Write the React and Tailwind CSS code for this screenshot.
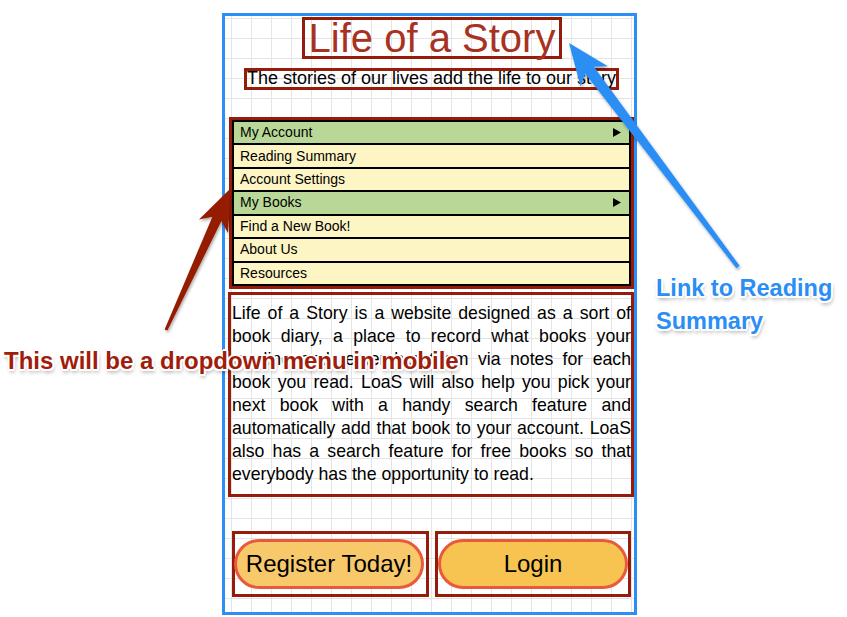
import React from "react";

const menu = [
  { label: "My Account", head: true },
  { label: "Reading Summary" },
  { label: "Account Settings" },
  { label: "My Books", head: true },
  { label: "Find a New Book!" },
  { label: "About Us" },
  { label: "Resources" },
];

function Arrows() {
  return (
    <svg
      className="absolute left-0 top-0 pointer-events-none"
      width="847"
      height="617"
      viewBox="0 0 847 617"
    >
      <defs>
        <filter id="sh" x="-20%" y="-20%" width="140%" height="140%">
          <feDropShadow dx="1" dy="2" stdDeviation="1.5" floodColor="#000" floodOpacity="0.35" />
        </filter>
      </defs>
      <polygon
        filter="url(#sh)"
        fill="#951b06"
        points="164.6,329.4 212.4,216.8 199,219.5 231,188 228,232.9 221.4,221 167.4,330.6"
      />
      <polygon
        filter="url(#sh)"
        fill="#2b8ef5"
        points="739.6,265.8 593.9,66.8 607.9,66.2 569,43 580.7,86.8 585.1,73.4 736.4,268.2"
      />
    </svg>
  );
}

export default function App() {
  return (
    <div className="relative w-[847px] h-[617px] overflow-hidden bg-white font-['Liberation_Sans',Arial,sans-serif]">
      <div className="pt-[13px] pl-[222px]">
        <div className="w-[415px] h-[602px] border-[3px] border-[#2c8ef7] bg-white bg-[linear-gradient(to_right,#e4e4e4_1px,transparent_1px),linear-gradient(to_bottom,#e4e4e4_1px,transparent_1px)] bg-size-[20px_20px] bg-position-[6px_2px]">
          <div className="flex flex-col">
            <div className="mt-[1px] ml-[77px] w-[260px] h-[42px] border-[3px] border-[#951c0b] flex justify-center text-[40px] leading-[36px] text-[#a8311f] whitespace-nowrap">
              Life of a Story
            </div>
            <div className="mt-[9px] ml-[19px] w-[375px] h-[22px] border-[3px] border-[#951c0b] flex justify-center text-[18px] leading-[14px] text-black whitespace-nowrap">
              The stories of our lives add the life to our story
            </div>
            <div className="mt-[27px] ml-[4px] w-[405px] h-[172px] border-[3px] border-[#951c0b]">
              <div className="h-[166px] border-2 border-black flex flex-col">
                {menu.map((m, i) => (
                  <div
                    key={m.label}
                    className={
                      "flex-1 flex items-center justify-between pl-[6px] pr-[8px] text-[14px] text-black " +
                      (i > 0 ? "border-t-2 border-black " : "") +
                      (m.head ? "bg-[#b9d898]" : "bg-[#fdf6c4]")
                    }
                  >
                    <span>{m.label}</span>
                    {m.head && (
                      <svg width="8" height="9" viewBox="0 0 8 9">
                        <polygon points="0,0 8,4.5 0,9" fill="#000" />
                      </svg>
                    )}
                  </div>
                ))}
              </div>
            </div>
            <div className="mt-[3px] ml-[3px] w-[406px] h-[205px] border-[3px] border-[#951c0b] pt-[7px] pl-[1px]">
              <p className="text-[17.7px] leading-[23px] text-black text-justify">
                Life of a Story is a website designed as a sort of book diary, a place to record what books your
                reading and remember them via notes for each book you read. LoaS will also help you pick your
                next book with a handy search feature and automatically add that book to your account. LoaS also
                has a search feature for free books so that everybody has the opportunity to read.
              </p>
            </div>
            <div className="mt-[34px] ml-[7px] flex gap-[6px]">
              <div className="w-[197px] h-[66px] border-[3px] border-[#951c0b] flex items-center pr-[1px]">
                <div className="-ml-[1px] w-full h-[50px] rounded-full border-[3px] border-[#e85a3b] bg-[#f8c96b] flex items-center justify-center text-[24px] text-black">
                  Register Today!
                </div>
              </div>
              <div className="w-[196px] h-[66px] border-[3px] border-[#951c0b] flex items-center">
                <div className="w-full h-[50px] rounded-full border-[3px] border-[#e85a3b] bg-[#f7c451] flex items-center justify-center text-[24px] text-black">
                  Login
                </div>
              </div>
            </div>
          </div>
        </div>
      </div>

      <Arrows />

      <div className="absolute left-[4px] top-[349px] text-[24px] leading-[24px] font-bold text-[#a01c0b] whitespace-nowrap [text-shadow:-1.5px_-1.5px_0_#fff,1.5px_-1.5px_0_#fff,-1.5px_1.5px_0_#fff,1.5px_1.5px_0_#fff,0_2px_0_#fff,0_-2px_0_#fff,2px_0_0_#fff,-2px_0_0_#fff,1px_3px_4px_rgba(0,0,0,0.45)]">
        This will be a dropdown menu in mobile
      </div>
      <div className="absolute left-[656px] top-[272px] text-[23.5px] leading-[33px] font-bold text-[#2b8ef5] whitespace-nowrap [text-shadow:-1.5px_-1.5px_0_#fff,1.5px_-1.5px_0_#fff,-1.5px_1.5px_0_#fff,1.5px_1.5px_0_#fff,0_2px_0_#fff,0_-2px_0_#fff,2px_0_0_#fff,-2px_0_0_#fff,1px_3px_4px_rgba(0,0,0,0.45)]">
        Link to Reading
        <br />
        Summary
      </div>
    </div>
  );
}
